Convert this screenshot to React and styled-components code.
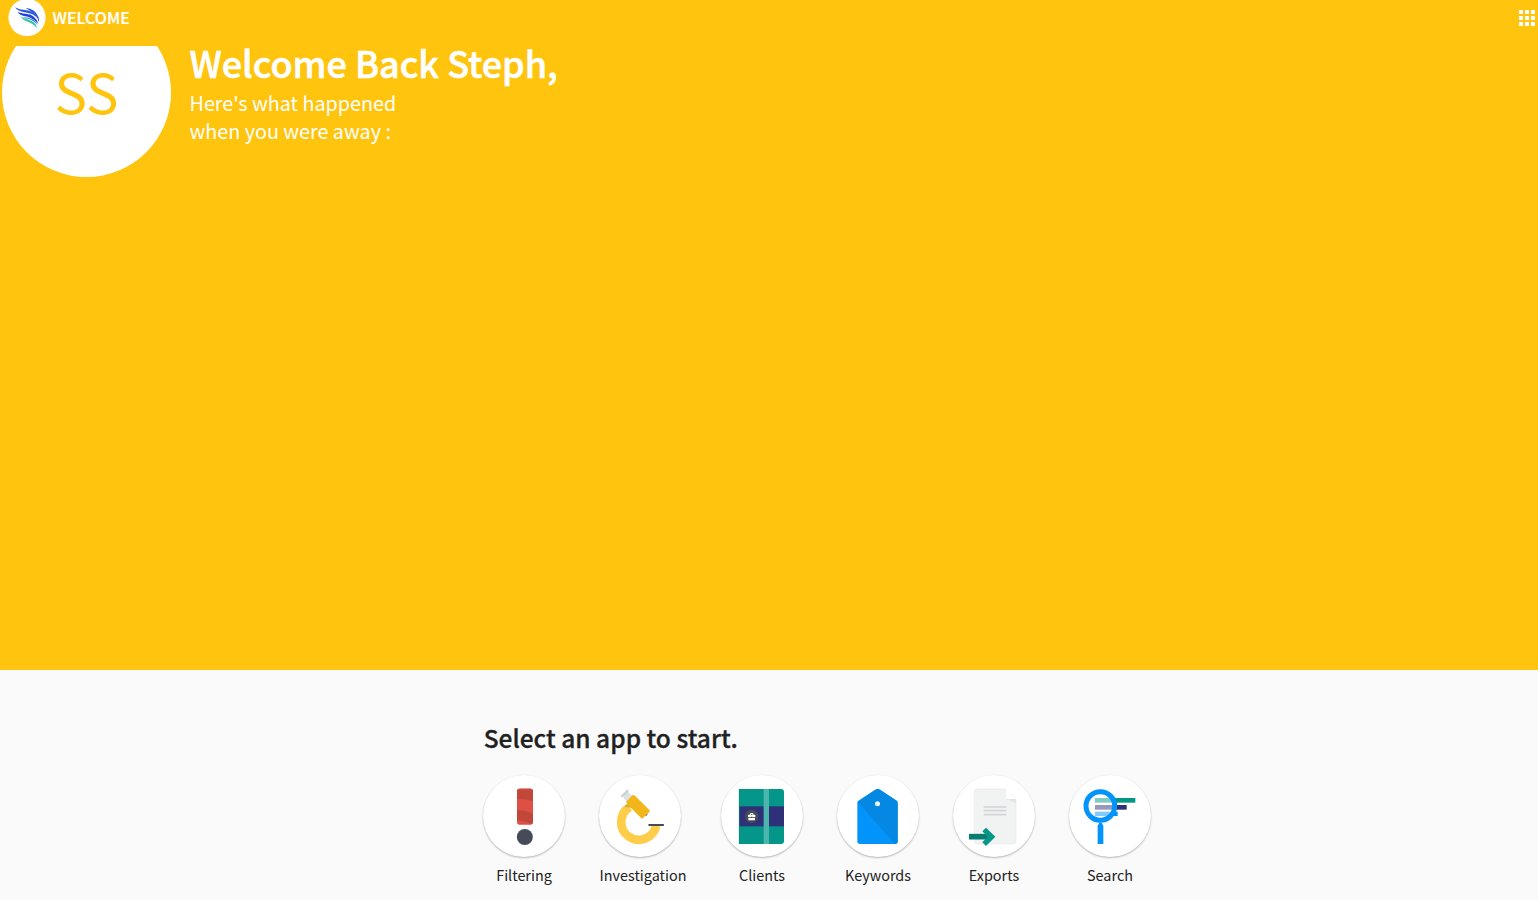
import React from 'react';
import styled, { createGlobalStyle } from 'styled-components';

const GlobalStyle = createGlobalStyle`
  * {
    box-sizing: border-box;
  }

  body {
    margin: 0;
    background-color: #fafafa;
    font-family: 'Noto Sans CJK SC', 'Noto Sans', sans-serif;
    color: #212121;
    overflow: hidden;
  }

  h1, h2, p {
    margin: 0;
  }
`;

const Page = styled.div`
  display: flex;
  flex-direction: column;
  height: 900px;
`;

const Header = styled.header`
  display: flex;
  align-items: flex-start;
  justify-content: space-between;
  height: 46px;
  flex: none;
  padding: 0 2px 0 8px;
  background-color: #ffc40d;
  color: #fff;
`;

const Brand = styled.div`
  display: flex;
  align-items: flex-start;
`;

const Logo = styled.svg`
  display: block;
  width: 38px;
  height: 37px;
`;

const BrandName = styled.span`
  margin-left: 6.5px;
  font-size: 16.1px;
  font-weight: 500;
  line-height: 34px;
  -webkit-text-stroke: 0.2px currentColor;
`;

const MenuIcon = styled.svg`
  display: block;
  width: 17px;
  height: 17px;
  margin-top: 10px;
`;

const Hero = styled.section`
  display: flex;
  height: 624px;
  flex: none;
  background-color: #ffc40d;
  color: #fff;
`;

const AvatarClip = styled.div`
  width: 169px;
  height: 131px;
  flex: none;
  display: flex;
  align-items: flex-end;
  margin: 0 18.5px 0 2px;
  overflow: hidden;
`;

const Avatar = styled.div`
  width: 169px;
  height: 169px;
  flex: none;
  border-radius: 50%;
  background-color: #fff;
  color: #ffc40d;
  font-size: 54.5px;
  line-height: 165px;
  text-align: center;
`;

const Title = styled.h1`
  font-size: 36px;
  font-weight: 500;
  line-height: 32px;
  -webkit-text-stroke: 0.6px currentColor;
`;

const Subtitle = styled.p`
  margin-top: 11px;
  font-size: 19.75px;
  line-height: 28px;
`;

const Launcher = styled.main`
  padding: 50px 0 0 483px;
`;

const Heading = styled.h2`
  padding-left: 0.7px;
  font-size: 24.5px;
  font-weight: 500;
  line-height: 36px;
  -webkit-text-stroke: 0.3px currentColor;
`;

const AppList = styled.div`
  display: grid;
  grid-template-columns: 82px 88px repeat(4, 82px);
  column-gap: 34px;
  margin-top: 19px;
`;

const AppItem = styled.div`
  display: flex;
  flex-direction: column;
`;

const Circle = styled.div`
  width: 82px;
  height: 82px;
  border-radius: 50%;
  background-color: #fff;
  box-shadow: 0 1px 2px rgba(0, 0, 0, 0.28), 0 0 1px rgba(0, 0, 0, 0.06);
`;

const Drawing = styled.svg`
  display: block;
  width: 82px;
  height: 82px;
`;

const AppLabel = styled.span`
  margin-top: 7px;
  font-size: 14.4px;
  line-height: 22px;
  text-align: center;
  white-space: nowrap;
`;

const FilteringIcon = () => (
  <Drawing viewBox="21 21 246 246">
    <rect x="123" y="62" width="48" height="108" rx="8" fill="#dd5145" />
    <path d="M131 62h32q8 0 8 8v30q-24-8-48-7V70q0-8 8-8z" fill="#c1473a" />
    <path d="M123 127q26-2 48 12v23q0 3-3 6-20-9-45-12z" fill="#c1473a" />
    <path d="M123 70q0-8 8-8h32q8 0 8 8-24-5-48-3z" fill="#d04b3f" />
    <circle cx="146.500" cy="207" r="24" fill="#454c57" />
  </Drawing>
);

const InvestigationIcon = () => (
  <Drawing viewBox="21 21 246 246">
    <path d="M113 117A53 53 0 1 0 192.500 173" fill="none" stroke="#ffcd4a" strokeWidth="26" />
    <path d="M96 118l12-12 18 16q-14-5-30-4z" fill="#d8ae3f" />
    <path d="M93 78l13-8 18 17-17 18-11-13z" fill="#dfe2e5" />
    <path d="M86 84l20-20 5 5-20 20z" fill="#ced2d6" />
    <path d="M158 139l8-3v4l-5 5z" fill="#454c57" />
    <path d="M121 82q4-3 8 1l43 43q3 3 0 6l-19 18q-3 3-6 0l-43-44q-3-3 0-6z" fill="#f2b61a" />
    <rect x="169" y="168" width="47" height="6" rx="2" fill="#454c57" />
  </Drawing>
);

const ClientsIcon = () => (
  <Drawing viewBox="21 21 246 246">
    <path d="M75 63h126q9 0 9 9v147q0 9-9 9H75z" fill="#049688" />
    <rect x="75" y="115" width="135" height="60" fill="#2e3078" />
    <rect x="149" y="63" width="16" height="165" fill="#4db6ac" />
    <path d="M76 63v165" stroke="#07867c" strokeWidth="2" />
    <circle cx="112.500" cy="145" r="20" fill="#454c57" />
    <path d="M109 141v-4h8v4" fill="none" stroke="#fff" strokeWidth="3" />
    <path d="M104 140h18q2 0 2 2v5h-9v-1h-4v1h-9v-5q0-2 2-2zM103 149h8v1h4v-1h8v6q0 2-2 2h-16q-2 0-2-2z" fill="#fff" />
  </Drawing>
);

const KeywordsIcon = () => (
  <Drawing viewBox="21 21 246 246">
    <path d="M84 100l52-35q7-4 14 0l50 33q3 3 3 7v115q0 8-8 8H90q-8 0-8-8V106q0-4 2-6z" fill="#0394fb" />
    <path d="M84 100l52-35q7-4 14 0l50 33q3 3 3 7v115q0 8-8 8L83 103z" fill="#0588e3" />
    <circle cx="142.500" cy="107" r="7.5" fill="#f1f3f3" />
  </Drawing>
);

const ExportsIcon = () => (
  <Drawing viewBox="21 21 246 246">
    <path d="M94 63h86l30 29v127q0 9-9 9H94q-9 0-9-9V72q0-9 9-9z" fill="#f1f2f2" stroke="#e8eaeb" strokeWidth="2" />
    <path d="M180 93h30v12z" fill="#e2e5e6" />
    <path d="M180 62l30 31h-24q-6 0-6-6z" fill="#fff" />
    <path d="M113 117h68M113 128h68M113 140h68" stroke="#d2d4d5" strokeWidth="5" />
    <path d="M69 206h57" stroke="#077c70" strokeWidth="17" />
    <path d="M120 179l28 27-28 28-11-11 16-17-16-16z" fill="#049688" />
  </Drawing>
);

const SearchIcon = () => (
  <Drawing viewBox="21 21 246 246">
    <rect x="99" y="90" width="121" height="14" fill="#049688" />
    <rect x="99" y="111" width="95" height="14" fill="#2e3078" />
    <rect x="99" y="131" width="68" height="13" fill="#0394fb" />
    <circle cx="115" cy="114" r="43" fill="#fff" fillOpacity="0.5" stroke="#0394fb" strokeWidth="15" />
    <path d="M107 173l5-9h7l5 9v55h-17z" fill="#0394fb" />
  </Drawing>
);

const apps = [
  { name: 'Filtering', Icon: FilteringIcon },
  { name: 'Investigation', Icon: InvestigationIcon },
  { name: 'Clients', Icon: ClientsIcon },
  { name: 'Keywords', Icon: KeywordsIcon },
  { name: 'Exports', Icon: ExportsIcon },
  { name: 'Search', Icon: SearchIcon },
];

const App = () => (
  <>
    <GlobalStyle />
    <Page>
      <Header>
        <Brand>
          <Logo viewBox="8 0 38 37">
            <circle cx="27" cy="17.5" r="18.6" fill="#fff" />
            <path d="M15 7.3Q19 9.700 25 10Q34 10.500 37.500 18Q33 13.200 26 12.400Q18 11.700 15 7.300z" fill="#2a55d8" />
            <path d="M25.500 8Q35 8.500 38.400 17Q39.500 20 38.800 22Q37 15 32 12Q29 10 25.500 8z" fill="#2450df" />
            <path d="M17.500 12Q22 13.700 27 14Q35 14.500 38.500 24Q33 18 27 16.500Q20 15.700 17.500 12z" fill="#1d43e0" />
            <path d="M23 17Q35 17.500 38 25.500Q34 20.500 29 19Q25 18.400 23 17z" fill="#2f7fd6" />
            <path d="M20.800 16.200Q24 18.300 28.500 19.800Q36 22 37.200 28Q33 23.500 28.500 22Q22.500 20.200 20.800 16.200z" fill="#2cc7a5" />
          </Logo>
          <BrandName>WELCOME</BrandName>
        </Brand>
        <MenuIcon viewBox="0 0 17 17" fill="#fff">
          {[0, 6, 12].map((y) =>
            [0, 6, 12].map((x) => <rect key={`${x}-${y}`} x={x} y={y} width="4" height="4" />)
          )}
        </MenuIcon>
      </Header>
      <Hero>
        <AvatarClip>
          <Avatar>SS</Avatar>
        </AvatarClip>
        <div>
          <Title>Welcome Back Steph,</Title>
          <Subtitle>
            Here's what happened
            <br />
            when you were away :
          </Subtitle>
        </div>
      </Hero>
      <Launcher>
        <Heading>Select an app to start.</Heading>
        <AppList>
          {apps.map(({ name, Icon }) => (
            <AppItem key={name}>
              <Circle>
                <Icon />
              </Circle>
              <AppLabel>{name}</AppLabel>
            </AppItem>
          ))}
        </AppList>
      </Launcher>
    </Page>
  </>
);

export default App;
